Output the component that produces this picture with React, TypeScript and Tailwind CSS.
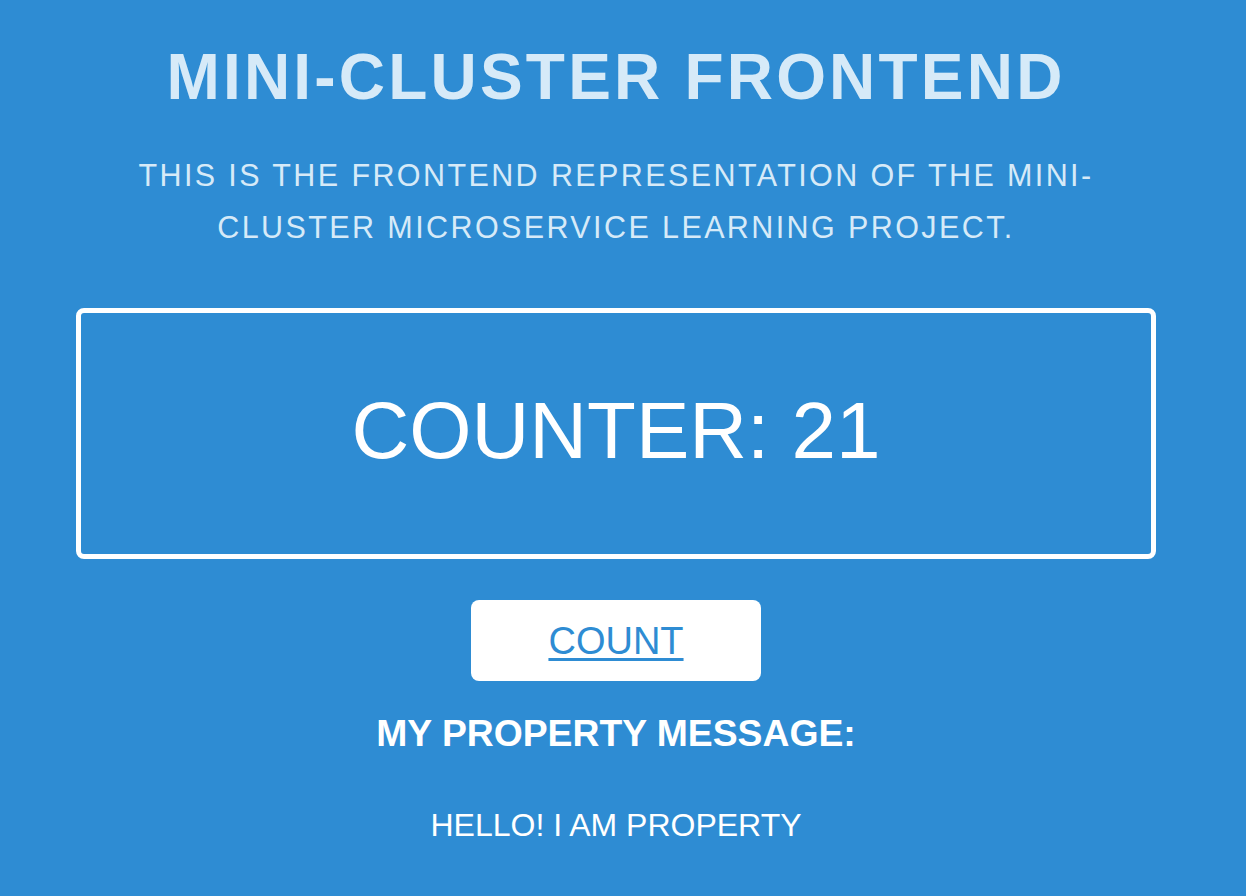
export default function App() {
  return (
    <div className="min-h-[896px] w-full bg-[#2e8cd3]" style={{ fontFamily: '"Liberation Sans", Arial, sans-serif' }}>
      <div className="w-[1232px] flex flex-col items-center">
        <h1 className="mt-[45px] text-[64px] leading-[64px] font-bold tracking-[3.2px] text-[#d6eaf8] uppercase">
          Mini-Cluster Frontend
        </h1>
        <p className="mt-[40px] w-[1000px] text-center text-[30.5px] leading-[52px] tracking-[2.4px] text-[#d6eaf8] uppercase">
          This is the frontend representation of the mini-cluster microservice learning project.
        </p>
        <div className="mt-[55px] w-[1080px] h-[251px] border-[5px] border-white rounded-[8px] pt-[78px] flex justify-center">
          <div className="text-[80px] leading-[80px] text-white">COUNTER: 21</div>
        </div>
        <button className="mt-[41px] w-[290px] h-[81px] bg-white rounded-[8px] flex items-center justify-center">
          <span className="text-[38px] leading-[38px] text-[#2e8cd3] underline underline-offset-[4px] decoration-[3px]">COUNT</span>
        </button>
        <h2 className="mt-[34px] text-[37.3px] leading-[37px] font-bold text-white">MY PROPERTY MESSAGE:</h2>
        <p className="mt-[57px] text-[32px] leading-[32px] text-white">HELLO! I AM PROPERTY</p>
      </div>
    </div>
  );
}
